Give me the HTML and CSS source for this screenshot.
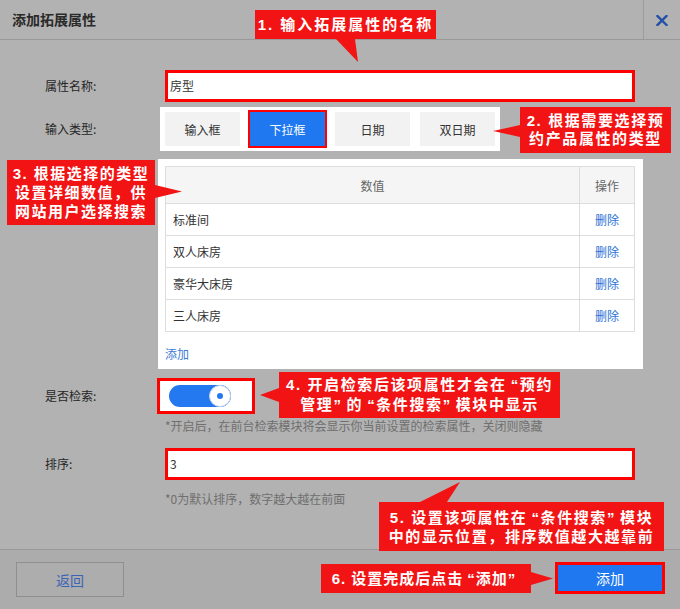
FILE: index.html
```html
<!DOCTYPE html>
<html lang="zh-CN">
<head>
<meta charset="utf-8">
<title>添加拓展属性</title>
<link rel="stylesheet" href="styles.css">
</head>
<body>
<div class="dialog">
  <header class="dlg-head">
    <h1 class="dlg-title">添加拓展属性</h1>
    <span class="dlg-close">
      <svg width="12" height="11" viewBox="0 0 12 11"><path d="M1.5 1 L10.5 10 M10.5 1 L1.5 10" stroke="#2150a8" stroke-width="2.4" stroke-linecap="square"/></svg>
    </span>
  </header>

  <main class="dlg-body">
    <div class="row row-name">
      <span class="label">属性名称:</span>
      <div class="input">房型</div>
    </div>

    <div class="row row-type">
      <span class="label">输入类型:</span>
      <div class="type-panel">
        <span class="type-btn">输入框</span>
        <span class="type-btn active">下拉框</span>
        <span class="type-btn">日期</span>
        <span class="type-btn">双日期</span>
      </div>
    </div>

    <div class="row row-values">
      <div class="values-panel">
        <table class="values">
          <thead>
            <tr><th class="col-val">数值</th><th class="col-op">操作</th></tr>
          </thead>
          <tbody>
            <tr><td class="col-val">标准间</td><td class="col-op"><a class="del">删除</a></td></tr>
            <tr><td class="col-val">双人床房</td><td class="col-op"><a class="del">删除</a></td></tr>
            <tr><td class="col-val">豪华大床房</td><td class="col-op"><a class="del">删除</a></td></tr>
            <tr><td class="col-val">三人床房</td><td class="col-op"><a class="del">删除</a></td></tr>
          </tbody>
        </table>
        <a class="add-link">添加</a>
      </div>
    </div>

    <div class="row row-switch">
      <span class="label">是否检索:</span>
      <div class="switch-box">
        <span class="switch"><span class="knob"></span></span>
      </div>
    </div>
    <p class="hint hint-search">*开启后，在前台检索模块将会显示你当前设置的检索属性，关闭则隐藏</p>

    <div class="row row-sort">
      <span class="label">排序:</span>
      <div class="input">3</div>
    </div>
    <p class="hint hint-sort">*0为默认排序，数字越大越在前面</p>
  </main>

  <footer class="dlg-foot">
    <button class="btn-back">返回</button>
    <button class="btn-add">添加</button>
  </footer>

  <div class="callout c1"><p class="ct">1. 输入拓展属性的名称</p></div>
  <div class="callout c2"><p class="ct">2. 根据需要选择预<br>约产品属性的类型</p></div>
  <div class="callout c3"><p class="ct">3. 根据选择的类型<br>设置详细数值，供<br>网站用户选择搜索</p></div>
  <div class="callout c4"><p class="ct">4. 开启检索后该项属性才会在<span class="qo">“</span>预约<br>管理<span class="qc">”</span>的<span class="qo">“</span>条件搜索<span class="qc">”</span>模块中显示</p></div>
  <div class="callout c5"><p class="ct">5. 设置该项属性在<span class="qo">“</span>条件搜索<span class="qc">”</span>模块<br>中的显示位置，排序数值越大越靠前</p></div>
  <div class="callout c6"><p class="ct">6. 设置完成后点击<span class="qo">“</span>添加<span class="qc">”</span></p></div>
</div>
</body>
</html>
```

FILE: styles.css
```css
* { box-sizing: border-box; margin: 0; padding: 0; }

html, body { width: 680px; height: 609px; overflow: hidden; }

body {
  background: #b2b2b2;
  font-family: "Noto Sans CJK SC", "Liberation Sans", sans-serif;
  font-size: 12px;
  color: #262626;
}

.dialog {
  position: relative;
  width: 680px;
  height: 609px;
  display: flex;
  flex-direction: column;
}

/* header */
.dlg-head {
  height: 40px;
  border-bottom: 1px solid #999;
  display: flex;
}
.dlg-title {
  flex: 1;
  font-size: 14px;
  font-weight: 700;
  line-height: 39px;
  padding-left: 12px;
  color: #2a2a2a;
}
.dlg-close {
  width: 37px;
  border-left: 1px solid #9c9c9c;
  display: flex;
  align-items: center;
  justify-content: center;
  padding-top: 1px;
}
.dlg-close svg { display: block; }

/* body */
.dlg-body { flex: 1; padding-top: 30px; }

.row {
  display: grid;
  grid-template-columns: 120px 470px;
  padding-left: 45px;
  align-items: center;
}
.label { font-size: 12px; line-height: 16px; color: #262626; }

.input {
  height: 32px;
  background: #fff;
  border: 3px solid #f00;
  padding-left: 2px;
  line-height: 26px;
  font-size: 12px;
  color: #333;
}

.row-type { margin-top: 5px; }
.type-panel {
  margin-left: -5px;
  width: 340px;
  background: #fff;
  padding: 5px;
  display: flex;
  gap: 10px;
}
.type-btn {
  width: 75px;
  height: 34px;
  background: #f2f2f2;
  color: #333;
  display: flex;
  align-items: center;
  justify-content: center;
  font-size: 12px;
}
.type-btn.active {
  background: #1f78f0;
  color: #fff;
  outline: 2px solid #f00;
}

.row-values { margin-top: 8px; }
.values-panel {
  grid-column: 2;
  margin-left: -7px;
  width: 485px;
  background: #fff;
  padding: 7px 8px 7px 7px;
}
.values {
  width: 470px;
  table-layout: fixed;
  border-collapse: separate;
  border-spacing: 0;
  border-top: 1px solid #ddd;
  border-left: 1px solid #ddd;
}
.values th, .values td {
  box-sizing: content-box;
  border-right: 1px solid #ddd;
  border-bottom: 1px solid #ddd;
  padding: 0;
  font-size: 12px;
  font-weight: 400;
}
.values th {
  height: 36px;
  background: #f5f5f5;
  color: #666;
  text-align: center;
}
.values td { height: 31px; color: #333; }
.values td.col-val { padding-left: 7px; }
.values .col-op { width: 54px; text-align: center; }
.del { color: #2a6fd8; }
.add-link {
  display: block;
  margin-top: 14px;
  line-height: 16px;
  color: #3a7bd5;
  font-size: 12px;
}

.row-switch { margin-top: 9px; }
.switch-box {
  margin-left: -8px;
  width: 98px;
  height: 36px;
  background: #fff;
  border: 3px solid #f00;
  display: flex;
  align-items: center;
  padding-left: 9px;
}
.switch {
  width: 62px;
  height: 22px;
  border-radius: 11px;
  background: #2478f0;
  display: flex;
  justify-content: flex-end;
}
.knob {
  width: 22px;
  height: 22px;
  border-radius: 50%;
  background: #fff;
  border: 1px solid #c4d3ea;
  display: flex;
  align-items: center;
  justify-content: center;
}
.knob::after {
  content: "";
  width: 6px;
  height: 6px;
  border-radius: 50%;
  background: #2478f0;
}

.hint {
  padding-left: 165px;
  font-size: 12px;
  line-height: 16px;
  color: #6f6f6f;
}
.hint-search { margin-top: 4px; }
.row-sort { margin-top: 14px; }
.hint-sort { margin-top: 11px; }

/* footer */
.dlg-foot {
  height: 60px;
  border-top: 1px solid #999;
  background: #acacac;
  padding: 12px 15px 0 16px;
  display: flex;
  justify-content: space-between;
  align-items: flex-start;
}
.btn-back {
  width: 108px;
  height: 35px;
  border: 1px solid #8f8f8f;
  background: #adadad;
  color: #3a64b5;
  font-family: inherit;
  font-size: 14px;
}
.btn-add {
  width: 110px;
  height: 32px;
  border: 3px solid #f00;
  background: #1f78f0;
  color: #fff;
  font-family: inherit;
  font-size: 14px;
}

/* annotation callouts */
.callout {
  position: absolute;
  background: #f21414;
  color: #fff;
  font-family: "Liberation Sans", "Noto Sans CJK SC", sans-serif;
  font-weight: 700;
  font-size: 15px;
  line-height: 19px;
  letter-spacing: 1.6px;
  display: flex;
  align-items: center;
  justify-content: center;
  text-align: center;
  white-space: nowrap;
}
.callout::after {
  content: "";
  position: absolute;
  background: #f21414;
}
.ct { display: block; }
.qo { padding-left: 4px; }
.qc { padding-right: 4px; }

.c1 { left: 255px; top: 10px; width: 181px; height: 29px; letter-spacing: 2px; }
.c1::after { left: 81px; top: 29px; width: 22px; height: 23px; clip-path: polygon(0 0, 19px 0, 100% 100%); }
.c2 { left: 520px; top: 107px; width: 151px; height: 46px; line-height: 18px; }
.c2::after { left: -27px; top: 18px; width: 27px; height: 12px; clip-path: polygon(100% 0, 100% 100%, 0 50%); }
.c3 { left: 7px; top: 160px; width: 148px; height: 65px; letter-spacing: 1.5px; }
.c3::after { left: 148px; top: 25px; width: 27px; height: 13px; clip-path: polygon(0 0, 0 100%, 100% 50%); }
.c4 { left: 279px; top: 372px; width: 281px; height: 46px; line-height: 20px; }
.c4::after { left: -19px; top: 16px; width: 19px; height: 14px; clip-path: polygon(100% 0, 100% 100%, 0 50%); }
.c5 { left: 379px; top: 502px; width: 285px; height: 49px; }
.c5::after { left: 41px; top: -20px; width: 40px; height: 20px; clip-path: polygon(0 100%, 27px 100%, 100% 0); }
.c6 { left: 321px; top: 564px; width: 210px; height: 29px; letter-spacing: 1px; }
.c6::after { left: 210px; top: 8px; width: 22px; height: 13px; clip-path: polygon(0 0, 0 100%, 100% 50%); }
```
